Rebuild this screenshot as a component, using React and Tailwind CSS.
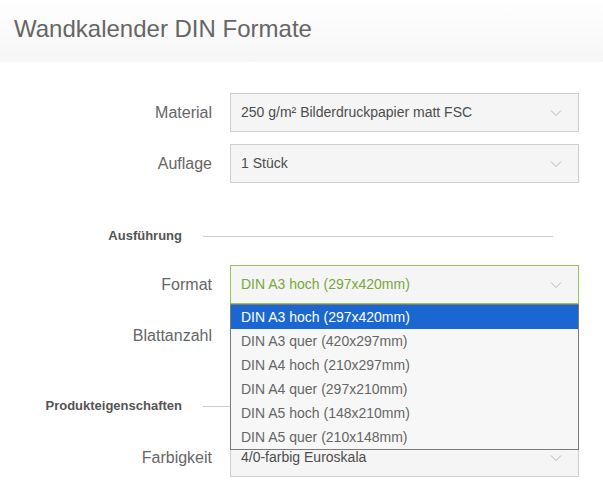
import { useState } from 'react';

const formats = [
  'DIN A3 hoch (297x420mm)',
  'DIN A3 quer (420x297mm)',
  'DIN A4 hoch (210x297mm)',
  'DIN A4 quer (297x210mm)',
  'DIN A5 hoch (148x210mm)',
  'DIN A5 quer (210x148mm)',
];

function Chevron() {
  return (
    <svg width="12" height="7" viewBox="0 0 12 7" className="absolute right-[16px] top-1/2 -translate-y-1/2">
      <polyline points="1,1 6,6 11,1" fill="none" stroke="#b5b5b5" strokeWidth="1" />
    </svg>
  );
}

function Select({ value, active, children }) {
  return (
    <div className="relative w-[349px]">
      <div
        className={
          active
            ? 'relative flex h-[39px] items-center border border-[#9cc25d] bg-[#f5f5f5] pl-[10px] text-[14px] text-[#77a83a]'
            : 'relative flex h-[39px] items-center border border-[#cfcfcf] bg-[#f5f5f5] pl-[10px] text-[14px] text-[#4d4d4d]'
        }
      >
        {value}
        <Chevron />
      </div>
      {children}
    </div>
  );
}

function Row({ label, children }) {
  return (
    <div className="flex items-center">
      <div className="w-[212px] text-right text-[16px] text-[#666]">{label}</div>
      <div className="ml-[18px]">{children}</div>
    </div>
  );
}

function Heading({ title }) {
  return (
    <div className="flex h-[28px] items-center">
      <div className="w-[182px] text-right text-[13px] font-bold text-[#555]">{title}</div>
      <div className="ml-[21px] mr-[50px] h-px flex-1 bg-[#cccccc]"></div>
    </div>
  );
}

export default function App() {
  const [selected] = useState(0);

  return (
    <div className="h-[482px] w-[603px] overflow-hidden bg-white" style={{ fontFamily: '"Liberation Sans", Arial, sans-serif' }}>
      {/* Header */}
      <div className="flex h-[62px] items-center bg-gradient-to-b from-white to-[#f6f6f6] pl-[14px]">
        <h1 className="mt-[-4px] text-[24px] text-[#666]">Wandkalender DIN Formate</h1>
      </div>

      <div className="mt-[31px] flex flex-col">
        <div className="flex flex-col gap-[12px]">
          <Row label="Material">
            <Select value="250 g/m² Bilderdruckpapier matt FSC" />
          </Row>
          <Row label="Auflage">
            <Select value="1 Stück" />
          </Row>
        </div>

        <div className="mt-[39px]">
          <Heading title="Ausführung" />
        </div>

        <div className="mt-[15px] flex flex-col gap-[12px]">
          <div className="relative z-10">
            <Row label="Format">
              <Select value={formats[selected]} active>
                {/* open option list */}
                <ul className="absolute left-0 top-full w-[349px] border border-[#7a7a7a] bg-[#f7f7f7] text-[14px]">
                  {formats.map((f, i) => (
                    <li
                      key={f}
                      className={
                        i === selected
                          ? 'flex h-[24px] items-center bg-[#1b67d2] pl-[10px] text-white'
                          : 'flex h-[24px] items-center pl-[10px] text-[#666]'
                      }
                    >
                      {f}
                    </li>
                  ))}
                </ul>
              </Select>
            </Row>
          </div>
          <Row label="Blattanzahl">
            <Select value="" />
          </Row>
        </div>

        <div className="mt-[37px]">
          <Heading title="Produkteigenschaften" />
        </div>

        <div className="mt-[18px]">
          <Row label="Farbigkeit">
            <Select value="4/0-farbig Euroskala" />
          </Row>
        </div>
      </div>
    </div>
  );
}
